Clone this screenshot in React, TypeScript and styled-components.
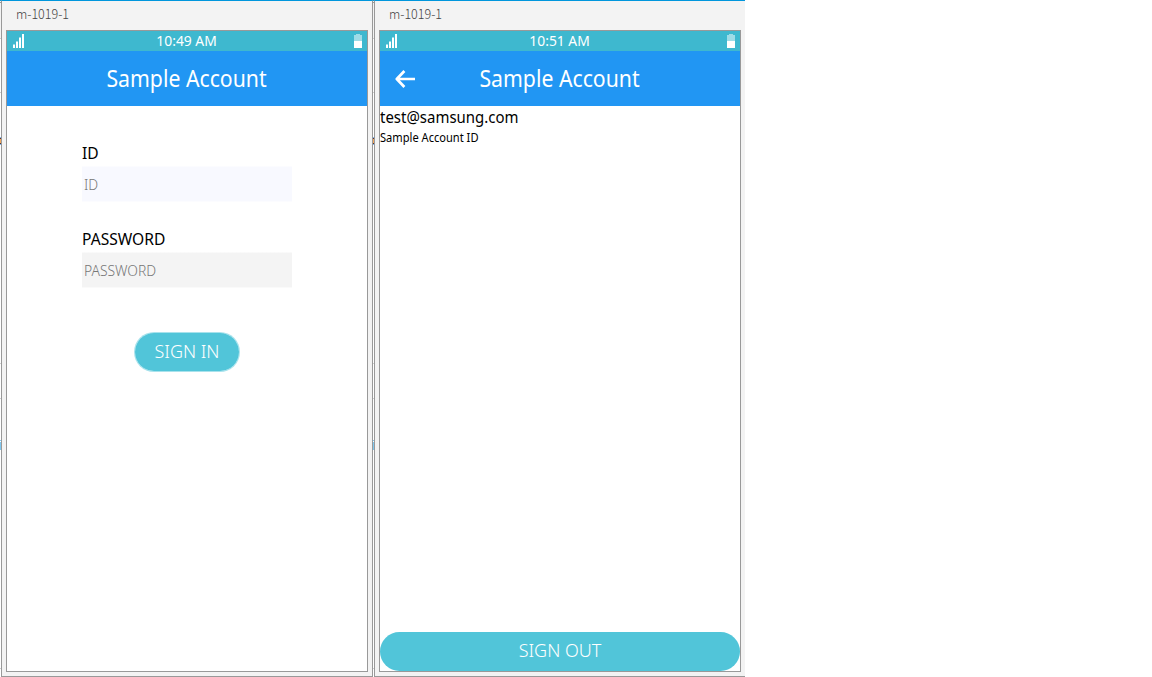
import React from "react";
import styled, { createGlobalStyle } from "styled-components";

const GlobalStyle = createGlobalStyle`
  * { box-sizing: border-box; }
  body { margin: 0; background: #fff; font-family: "Open Sans", "Noto Sans", sans-serif; }
`;

const Desktop = styled.main`
  display: flex;
  width: 1152px;
  height: 677px;
  overflow: hidden;
  background: #fff;
`;

const Gutter = styled.div`
  width: 1px;
  height: 677px;
  flex: none;
  background: linear-gradient(
    #0096dc 0 1px, #f3f3f3 1px 2px, #999 2px 3px, #f3f3f3 3px 38px, #d0d0d0 38px 39px,
    #fff 39px 92px, #d0d0d0 92px 93px, #fff 93px 137px, #7bb3ee 137px 138px,
    #5b3430 138px 139px, #f0a75c 139px 143px, #5b3430 143px 144px, #7bb3ee 144px 145px,
    #fff 145px 363px, #d0d0d0 363px 364px, #fff 364px 398px, #d0d0d0 398px 399px,
    #fff 399px 440px, #80c8f0 440px 441px, #fff 441px 442px, #80c8f0 442px 450px,
    #fff 450px 668px, #d0d0d0 668px 669px, #fff 669px
  );
`;

const DeviceWindow = styled.section<{ $cut?: boolean }>`
  display: flex;
  flex-direction: column;
  flex: none;
  width: ${(p) => (p.$cut ? 371 : 372)}px;
  height: 677px;
  padding: 0 4px 4px;
  background: #f3f3f3;
  border: 1px solid #999;
  border-top-color: #0096dc;
  border-right-width: ${(p) => (p.$cut ? 0 : 1)}px;
`;

const WindowTitle = styled.div`
  display: flex;
  align-items: center;
  height: 29px;
  padding: 0 0 2px 10px;
`;

const Screen = styled.div`
  display: flex;
  flex-direction: column;
  width: 362px;
  height: 642px;
  background: #fff;
  border: 1px solid #999;
`;

const StatusBar = styled.div`
  display: grid;
  grid-template-columns: 11px 1fr 8px;
  align-items: center;
  justify-items: center;
  height: 20px;
  padding: 0 5px 0 6px;
  background: #3eb8cf;

  svg { display: block; }
  span { margin-right: 4px; }
`;

const Header = styled.header`
  display: grid;
  grid-template-columns: 50px 1fr 50px;
  place-items: center;
  height: 55px;
  padding-bottom: 1px;
  background: #2196f3;

  svg { display: block; margin-top: 1px; }
`;

const Label = styled.span<{
  $size: number; $color?: string; $weight?: number; $stretch?: number; $origin?: string; $font?: string;
}>`
  display: block;
  white-space: nowrap;
  line-height: 1.4;
  font-family: ${(p) => p.$font ?? '"Noto Sans"'}, sans-serif;
  font-size: ${(p) => p.$size}px;
  font-weight: ${(p) => p.$weight ?? 400};
  color: ${(p) => p.$color ?? "#000"};
  transform: scaleX(${(p) => p.$stretch ?? 1});
  transform-origin: ${(p) => p.$origin ?? "center"};
`;

const Form = styled.form`
  display: flex;
  flex-direction: column;
  width: 210px;
  margin: 35px 0 0 75px;
`;

const Field = styled.label`
  display: flex;
  flex-direction: column;
  height: 61px;
  margin-bottom: 25px;
`;

const FieldName = styled.div`
  display: flex;
  align-items: center;
  height: 25px;
`;

const FieldBox = styled.div<{ $tint: string }>`
  display: flex;
  align-items: center;
  height: 36px;
  padding: 1px 2px 0;
  background: linear-gradient(#fff8, #fff8) top / 100% 1px no-repeat,
    linear-gradient(#fff8, #fff8) bottom / 100% 1px no-repeat, ${(p) => p.$tint};
`;

const Button = styled.button<{ $wide?: boolean }>`
  display: flex;
  align-items: center;
  justify-content: center;
  width: ${(p) => (p.$wide ? "360px" : "106px")};
  height: ${(p) => (p.$wide ? "39px" : "40px")};
  margin: ${(p) => (p.$wide ? "auto 0 0" : "19px 0 0 52px")};
  padding: 0 0 1px;
  border: ${(p) => (p.$wide ? "0" : "1px solid #51c5d980")};
  border-radius: 20px;
  background: #51c5d9;
  background-clip: padding-box;
`;

const AccountRow = styled.div<{ $height: number }>`
  display: flex;
  align-items: center;
  height: ${(p) => p.$height}px;
`;

const Signal = () => (
  <svg width="11" height="14" viewBox="0 0 11 14" fill="#fff" shapeRendering="crispEdges">
    <path d="M0 10h2v4H0zM3 7h2v7H3zM6 3h2v11H6zM9 0h2v14H9z" />
    <path d="M0 10h2v1H0zM3 7h2v1H3zM6 3h2v1H6z" fill="#9edce7" />
  </svg>
);

const Battery = () => (
  <svg width="8" height="14" viewBox="0 0 8 14" shapeRendering="crispEdges">
    <path d="M2 0h4v1h2v6H0V1h2z" fill="#9edce7" />
    <path d="M0 7h8v7H0z" fill="#fff" />
  </svg>
);

const BackArrow = () => (
  <svg width="20" height="18" viewBox="0 0 20 18" fill="none" stroke="#fff" strokeWidth="2.7" strokeLinejoin="round">
    <path d="M9.4 1 1.8 9l7.6 8M2 9h18" />
  </svg>
);

const Device = ({ time, back, cut, children }: {
  time: string; back?: boolean; cut?: boolean; children: React.ReactNode;
}) => (
  <DeviceWindow $cut={cut}>
    <WindowTitle>
      <Label $size={13} $color="#444" $weight={300} $font={'"Noto Sans CJK KR"'} $origin="left" $stretch={0.96}>m-1019-1</Label>
    </WindowTitle>
    <Screen>
      <StatusBar>
        <Signal />
        <Label $size={14} $color="#fff" $stretch={0.99}>{time}</Label>
        <Battery />
      </StatusBar>
      <Header>
        <span>{back && <BackArrow />}</span>
        <Label $size={24} $color="#fff" $stretch={0.885}>Sample Account</Label>
      </Header>
      {children}
    </Screen>
  </DeviceWindow>
);

const fields = [
  { name: "ID", tint: "#f8f9ff" },
  { name: "PASSWORD", tint: "#f4f4f4" },
];

export default function App() {
  return (
    <>
      <GlobalStyle />
      <Desktop>
        <Gutter />
        <Device time="10:49 AM">
          <Form>
            {fields.map((f) => (
              <Field key={f.name}>
                <FieldName><Label $size={16} $stretch={0.975} $origin="left">{f.name}</Label></FieldName>
                <FieldBox $tint={f.tint}>
                  <Label $size={14} $weight={300} $color="#777" $stretch={0.99} $origin="left">{f.name}</Label>
                </FieldBox>
              </Field>
            ))}
            <Button type="button"><Label $size={18} $weight={300} $color="#fff">SIGN IN</Label></Button>
          </Form>
        </Device>
        <Gutter />
        <Device time="10:51 AM" back cut>
          <AccountRow $height={22}><Label $size={16} $stretch={0.935} $origin="left">test@samsung.com</Label></AccountRow>
          <AccountRow $height={21}><Label $size={12} $stretch={0.925} $origin="left">Sample Account ID</Label></AccountRow>
          <Button type="button" $wide><Label $size={18} $weight={300} $color="#fff">SIGN OUT</Label></Button>
        </Device>
      </Desktop>
    </>
  );
}
